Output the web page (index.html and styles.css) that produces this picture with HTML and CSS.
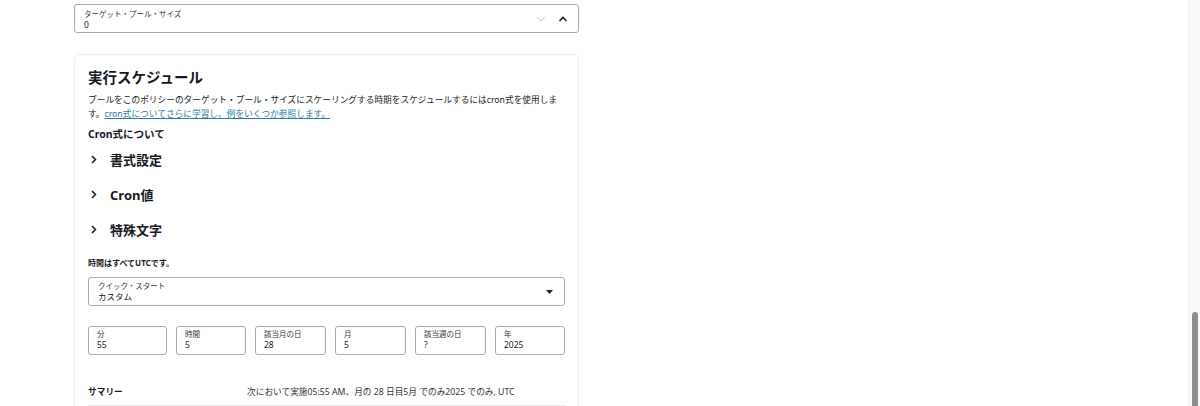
FILE: index.html
```html
<!DOCTYPE html>
<html lang="ja">
<head>
  <meta charset="UTF-8">
  <title>実行スケジュール</title>
  <link rel="stylesheet" href="styles.css">
</head>
<body>

<div class="page">
  <!-- target pool size -->
  <div class="field top-field">
    <div class="field-text">
      <div class="field-label">ターゲット・プール・サイズ</div>
      <div class="field-value">0</div>
    </div>
    <div class="spin">
      <svg width="10" height="6" viewBox="0 0 10 6"><path d="M1 1l4 4 4-4" fill="none" stroke="#c4c4c4" stroke-width="1"/></svg>
      <svg width="10" height="6" viewBox="0 0 10 6"><path d="M1.5 5l3.5-3.5 3.5 3.5" fill="none" stroke="#222" stroke-width="1.6"/></svg>
    </div>
  </div>

  <!-- schedule card -->
  <div class="card">
    <h3>実行スケジュール</h3>
    <p class="desc">プールをこのポリシーのターゲット・プール・サイズにスケーリングする時期をスケジュールするにはcron式を使用します。<a href="#">cron式についてさらに学習し、例をいくつか参照します。</a></p>
    <div class="sub">Cron式について</div>

    <div class="expander"><svg class="chev" width="6" height="9" viewBox="0 0 6 9"><path d="M1 1l3.5 3.5L1 8" fill="none" stroke="#16191f" stroke-width="1.5"/></svg>書式設定</div>
    <div class="expander"><svg class="chev" width="6" height="9" viewBox="0 0 6 9"><path d="M1 1l3.5 3.5L1 8" fill="none" stroke="#16191f" stroke-width="1.5"/></svg>Cron値</div>
    <div class="expander"><svg class="chev" width="6" height="9" viewBox="0 0 6 9"><path d="M1 1l3.5 3.5L1 8" fill="none" stroke="#16191f" stroke-width="1.5"/></svg>特殊文字</div>

    <div class="note">時間はすべてUTCです。</div>

    <div class="field select">
      <div class="field-text">
        <div class="field-label">クイック・スタート</div>
        <div class="field-value">カスタム</div>
      </div>
      <svg width="7" height="4" viewBox="0 0 7 4"><path d="M0 0h7L3.5 4z" fill="#222"/></svg>
    </div>

    <div class="cron-row">
      <div class="field small"><div class="field-label">分</div><div class="field-value">55</div></div>
      <div class="field small"><div class="field-label">時間</div><div class="field-value">5</div></div>
      <div class="field small"><div class="field-label">該当月の日</div><div class="field-value">28</div></div>
      <div class="field small"><div class="field-label">月</div><div class="field-value">5</div></div>
      <div class="field small"><div class="field-label">該当週の日</div><div class="field-value">?</div></div>
      <div class="field small"><div class="field-label">年</div><div class="field-value">2025</div></div>
    </div>

    <div class="summary">
      <div class="summary-key">サマリー</div>
      <div class="summary-val">次において実施05:55 AM、月の 28 日目5月 でのみ2025 でのみ, UTC</div>
    </div>
  </div>
</div>

<div class="scrollbar"><div class="thumb"></div></div>

</body>
</html>
```

FILE: styles.css
```css
html, body {
  margin: 0;
  padding: 0;
  height: 406px;
  overflow: hidden;
  background-color: #ffffff;
}
body {
  font-family: "Noto Sans", "Noto Sans CJK JP", sans-serif;
  color: #16191f;
}
.page {
  width: 505px;
  margin-left: 74px;
  padding-top: 4px;
}
.field {
  box-sizing: border-box;
  border: 1px solid #a9a9a9;
  border-radius: 3px;
  background-color: #ffffff;
}
.field-label {
  font-size: 7.5px;
  line-height: 10px;
  color: #333;
}
.field-value {
  font-size: 8.5px;
  line-height: 11px;
  color: #16191f;
}
.top-field {
  height: 29px;
  display: flex;
  align-items: center;
  justify-content: space-between;
  padding: 1px 10px 0 9px;
}
.spin {
  display: flex;
  align-items: center;
  gap: 12px;
}
.card {
  box-sizing: border-box;
  margin-top: 21px;
  height: 380px;
  border: 1px solid #ececec;
  border-radius: 6px;
  padding: 11px 13px 0 13px;
}
h3 {
  margin: 0;
  font-size: 14.5px;
  line-height: 22px;
  font-weight: bold;
}
.desc {
  margin: 6px 0 0 0;
  font-size: 8.7px;
  line-height: 13.5px;
  color: #222;
}
.desc a {
  color: #2b7aa6;
  text-decoration: underline;
}
.sub {
  margin-top: 5px;
  font-size: 10.5px;
  line-height: 16px;
  font-weight: bold;
}
.expander {
  display: flex;
  align-items: center;
  height: 35px;
  font-size: 13px;
  font-weight: bold;
}
.expander:first-of-type {
  margin-top: 1px;
}
.chev {
  margin: 0 13px 0 3px;
}
.note {
  margin-top: 10px;
  font-size: 8px;
  line-height: 12px;
  font-weight: bold;
}
.select {
  margin-top: 8px;
  height: 29px;
  display: flex;
  align-items: center;
  justify-content: space-between;
  padding: 0 11px 0 9px;
}
.cron-row {
  margin-top: 20px;
  display: grid;
  grid-template-columns: 79px 70px 71px 71px 71px 70px;
  column-gap: 9px;
}
.small {
  height: 29px;
  padding: 2px 8px 0 8px;
}
.summary {
  margin-top: 22px;
  display: flex;
  align-items: center;
  height: 28px;
  border-bottom: 1px solid #e9ebed;
  font-size: 8.7px;
}
.summary-key {
  width: 159px;
  font-weight: bold;
}
.summary-val {
  color: #333;
}
.scrollbar {
  position: fixed;
  top: 0;
  right: 0;
  width: 11px;
  height: 406px;
  background-color: #fafafa;
  border-left: 1px solid #efefef;
}
.thumb {
  position: absolute;
  top: 312px;
  left: 3px;
  width: 6px;
  height: 100px;
  border-radius: 3px;
  background-color: #8d8d8d;
}
```
